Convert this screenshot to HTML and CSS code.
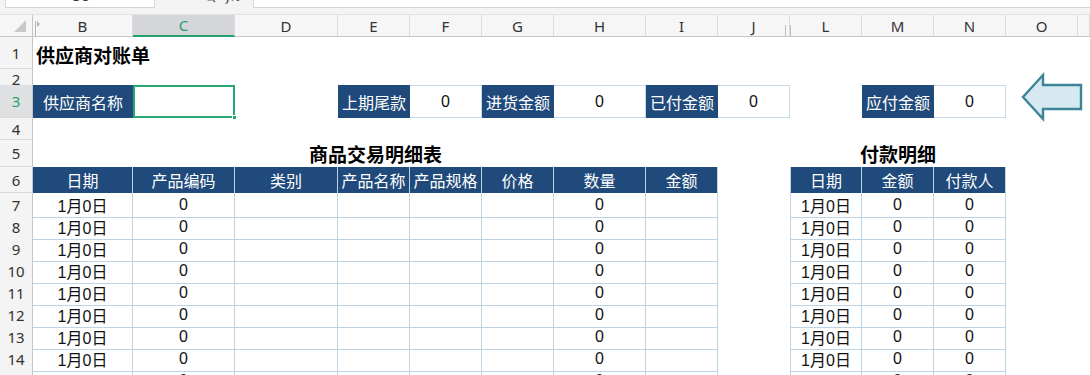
FILE: index.html
```html
<!DOCTYPE html>
<html lang="zh-CN">
<head>
<meta charset="utf-8">
<title>供应商对账单</title>
<link rel="stylesheet" href="styles.css">
</head>
<body>
<div class="fbar">
  <div class="namebox"><span>C3</span></div>
  <div class="fxzone">
    <svg class="mag" width="11" height="11" viewBox="0 0 11 11"><circle cx="4.5" cy="4.5" r="3.5" fill="none" stroke="#555" stroke-width="1.2"/><line x1="7" y1="7" x2="10" y2="10" stroke="#555" stroke-width="1.2"/></svg>
    <span class="fx">fx</span>
  </div>
  <div class="fbox"></div>
</div>

<div class="sheet">
  <div class="row hdr">
    <div class="corner"><span class="tri"></span></div>
    <div class="ch colb">B</div><div class="ch sel">C</div><div class="ch">D</div><div class="ch">E</div><div class="ch">F</div><div class="ch">G</div><div class="ch">H</div><div class="ch">I</div><div class="ch">J</div><div class="ch coll">L</div><div class="ch">M</div><div class="ch">N</div><div class="ch">O</div><div class="ch"></div>
  </div>

  <div class="row r1"><div class="rh">1</div><div class="c title left span4">供应商对账单</div></div>
  <div class="row r2"><div class="rh">2</div></div>
  <div class="row r3">
    <div class="rh rsel">3</div>
    <div class="c lab">供应商名称</div>
    <div class="c selcell"><span class="handle"></span></div>
    <div class="c"></div>
    <div class="c lab">上期尾款</div><div class="c val">0</div>
    <div class="c lab">进货金额</div><div class="c val">0</div>
    <div class="c lab">已付金额</div><div class="c val">0</div>
    <div class="c"></div>
    <div class="c lab">应付金额</div><div class="c val">0</div>
  </div>
  <div class="row r4"><div class="rh">4</div></div>
  <div class="row r5"><div class="rh">5</div><div class="c title span8">商品交易明细表</div><div class="c"></div><div class="c title span3">付款明细</div></div>
  <div class="row r6">
    <div class="rh">6</div>
    <div class="c th">日期</div><div class="c th">产品编码</div><div class="c th">类别</div><div class="c th">产品名称</div><div class="c th">产品规格</div><div class="c th">价格</div><div class="c th">数量</div><div class="c th">金额</div>
    <div class="c"></div>
    <div class="c th tl">日期</div><div class="c th">金额</div><div class="c th">付款人</div>
  </div>

  <div class="row rd"><div class="rh">7</div><div class="c t">1月0日</div><div class="c t">0</div><div class="c t"></div><div class="c t"></div><div class="c t"></div><div class="c t"></div><div class="c t">0</div><div class="c t"></div><div class="c"></div><div class="c t tl">1月0日</div><div class="c t">0</div><div class="c t">0</div></div>
  <div class="row rd"><div class="rh">8</div><div class="c t">1月0日</div><div class="c t">0</div><div class="c t"></div><div class="c t"></div><div class="c t"></div><div class="c t"></div><div class="c t">0</div><div class="c t"></div><div class="c"></div><div class="c t tl">1月0日</div><div class="c t">0</div><div class="c t">0</div></div>
  <div class="row rd"><div class="rh">9</div><div class="c t">1月0日</div><div class="c t">0</div><div class="c t"></div><div class="c t"></div><div class="c t"></div><div class="c t"></div><div class="c t">0</div><div class="c t"></div><div class="c"></div><div class="c t tl">1月0日</div><div class="c t">0</div><div class="c t">0</div></div>
  <div class="row rd"><div class="rh">10</div><div class="c t">1月0日</div><div class="c t">0</div><div class="c t"></div><div class="c t"></div><div class="c t"></div><div class="c t"></div><div class="c t">0</div><div class="c t"></div><div class="c"></div><div class="c t tl">1月0日</div><div class="c t">0</div><div class="c t">0</div></div>
  <div class="row rd"><div class="rh">11</div><div class="c t">1月0日</div><div class="c t">0</div><div class="c t"></div><div class="c t"></div><div class="c t"></div><div class="c t"></div><div class="c t">0</div><div class="c t"></div><div class="c"></div><div class="c t tl">1月0日</div><div class="c t">0</div><div class="c t">0</div></div>
  <div class="row rd"><div class="rh">12</div><div class="c t">1月0日</div><div class="c t">0</div><div class="c t"></div><div class="c t"></div><div class="c t"></div><div class="c t"></div><div class="c t">0</div><div class="c t"></div><div class="c"></div><div class="c t tl">1月0日</div><div class="c t">0</div><div class="c t">0</div></div>
  <div class="row rd"><div class="rh">13</div><div class="c t">1月0日</div><div class="c t">0</div><div class="c t"></div><div class="c t"></div><div class="c t"></div><div class="c t"></div><div class="c t">0</div><div class="c t"></div><div class="c"></div><div class="c t tl">1月0日</div><div class="c t">0</div><div class="c t">0</div></div>
  <div class="row rd"><div class="rh">14</div><div class="c t">1月0日</div><div class="c t">0</div><div class="c t"></div><div class="c t"></div><div class="c t"></div><div class="c t"></div><div class="c t">0</div><div class="c t"></div><div class="c"></div><div class="c t tl">1月0日</div><div class="c t">0</div><div class="c t">0</div></div>
  <div class="row rd"><div class="rh">15</div><div class="c t">1月0日</div><div class="c t">0</div><div class="c t"></div><div class="c t"></div><div class="c t"></div><div class="c t"></div><div class="c t">0</div><div class="c t"></div><div class="c"></div><div class="c t tl">1月0日</div><div class="c t">0</div><div class="c t">0</div></div>
</div>

<svg class="arrow" width="70" height="56" viewBox="0 0 70 56">
  <path d="M5 27 L25 5 L25 15 L63 15 L63 39 L25 39 L25 49 Z" fill="#d6e9f1" stroke="#3e8497" stroke-width="2.4" stroke-linejoin="miter"/>
</svg>
</body>
</html>
```

FILE: styles.css
```css
* { box-sizing: border-box; margin: 0; padding: 0; }

body {
  margin: 0;
  width: 1090px;
  height: 375px;
  overflow: hidden;
  background: #ffffff;
  position: relative;
  font-family: "Liberation Sans", "Noto Sans CJK SC", sans-serif;
  color: #111;
}

/* formula bar (mostly scrolled off) */
.fbar {
  height: 15px;
  background: #f3f3f3;
  display: flex;
  align-items: flex-start;
  border-bottom: 1px solid #e2e2e2;
}
.namebox {
  margin-left: 5px;
  width: 150px;
  height: 8px;
  background: #fff;
  border: 1px solid #d4d4d4;
  border-top: none;
  overflow: hidden;
  display: flex;
  justify-content: center;
  align-items: flex-end;
  font-size: 15px;
  line-height: 15px;
}
.namebox span { margin-bottom: 4px; color: #333; }
.fxzone {
  width: 98px;
  height: 8px;
  overflow: hidden;
  display: flex;
  align-items: flex-end;
  gap: 10px;
  padding-left: 50px;
}
.mag { margin-bottom: 5px; flex: none; }
.fx {
  font-family: "DejaVu Serif", serif;
  font-style: italic;
  font-size: 15px;
  line-height: 15px;
  color: #444;
  margin-bottom: 4px;
}
.fbox {
  flex: 1;
  height: 8px;
  background: #fff;
  border: 1px solid #d4d4d4;
  border-top: none;
  border-right: none;
}

/* sheet grid */
.sheet { display: flex; flex-direction: column; }
.row {
  display: grid;
  grid-template-columns: 33px 100px 102px 103px 72px 72px 72px 92px 72px 72px 72px 72px 72px 72px 12px;
}
.hdr { height: 22px; background: #f6f6f6; border-bottom: 1px solid #c6c6c6; }
.r1 { height: 32px; }
.r2 { height: 16px; }
.r3 { height: 33px; }
.r4 { height: 22px; }
.r5 { height: 27px; }
.r6 { height: 26px; }
.rd { height: 22px; }

.corner {
  border-right: 1px solid #c6c6c6;
  position: relative;
}
.tri {
  position: absolute;
  right: 6px;
  bottom: 4px;
  width: 0;
  height: 0;
  border-left: 12px solid transparent;
  border-bottom: 12px solid #c9c9c9;
}
.ch {
  display: flex;
  align-items: center;
  justify-content: center;
  font-family: "Noto Sans", sans-serif;
  font-size: 15px;
  color: #333;
  border-right: 1px solid #dcdcdc;
  position: relative;
}
.ch.sel {
  background: #d4d6da;
  color: #1fa06b;
  border-bottom: 2px solid #22a36e;
  margin-bottom: -1px;
}
.colb::before {
  content: "";
  position: absolute;
  left: 2px;
  top: 6px;
  width: 1px;
  height: 15px;
  background: #b5b5b5;
}
.colb::after {
  content: "";
  position: absolute;
  left: 4px;
  top: 6px;
  border-left: 3px solid #b5b5b5;
  border-top: 3px solid transparent;
  border-bottom: 3px solid transparent;
}
.coll::before {
  content: "";
  position: absolute;
  left: -5px;
  top: 10px;
  width: 4px;
  height: 12px;
  border-left: 1px solid #bdbdbd;
  border-right: 1px solid #bdbdbd;
}

.rh {
  display: flex;
  align-items: center;
  justify-content: center;
  background: #f4f4f4;
  border-right: 1px solid #c6c6c6;
  border-bottom: 1px solid #dadada;
  font-family: "Noto Sans", sans-serif;
  font-size: 15px;
  color: #333;
}
.rh.rsel { background: #dfe0e2; color: #1fa06b; }

.c {
  display: flex;
  align-items: center;
  justify-content: center;
  font-size: 16px;
  white-space: nowrap;
  min-width: 0;
}
.title { font-weight: 700; font-size: 19px; color: #000; }
.title.left { justify-content: flex-start; padding-left: 3px; padding-top: 2px; }
.span4 { grid-column: span 4; }
.span8 { grid-column: span 8; }
.span3 { grid-column: span 3; }

.lab { background: #1f4a7b; color: #fff; }
.val { border: 1px solid #c6dbe9; border-left: none; }
.selcell {
  border: 2px solid #27a872;
  position: relative;
}
.handle {
  position: absolute;
  right: -4px;
  bottom: -4px;
  width: 5px;
  height: 5px;
  background: #27a872;
  border: 1px solid #fff;
}

.th {
  background: #1f4a7b;
  color: #fff;
  border-right: 1px solid #b9d2e5;
}
.t {
  border-right: 1px solid #bcd4e5;
  border-bottom: 1px solid #bcd4e5;
}
.tl { border-left: 1px solid #bcd4e5; }

.arrow {
  position: absolute;
  left: 1018px;
  top: 70px;
}
```
